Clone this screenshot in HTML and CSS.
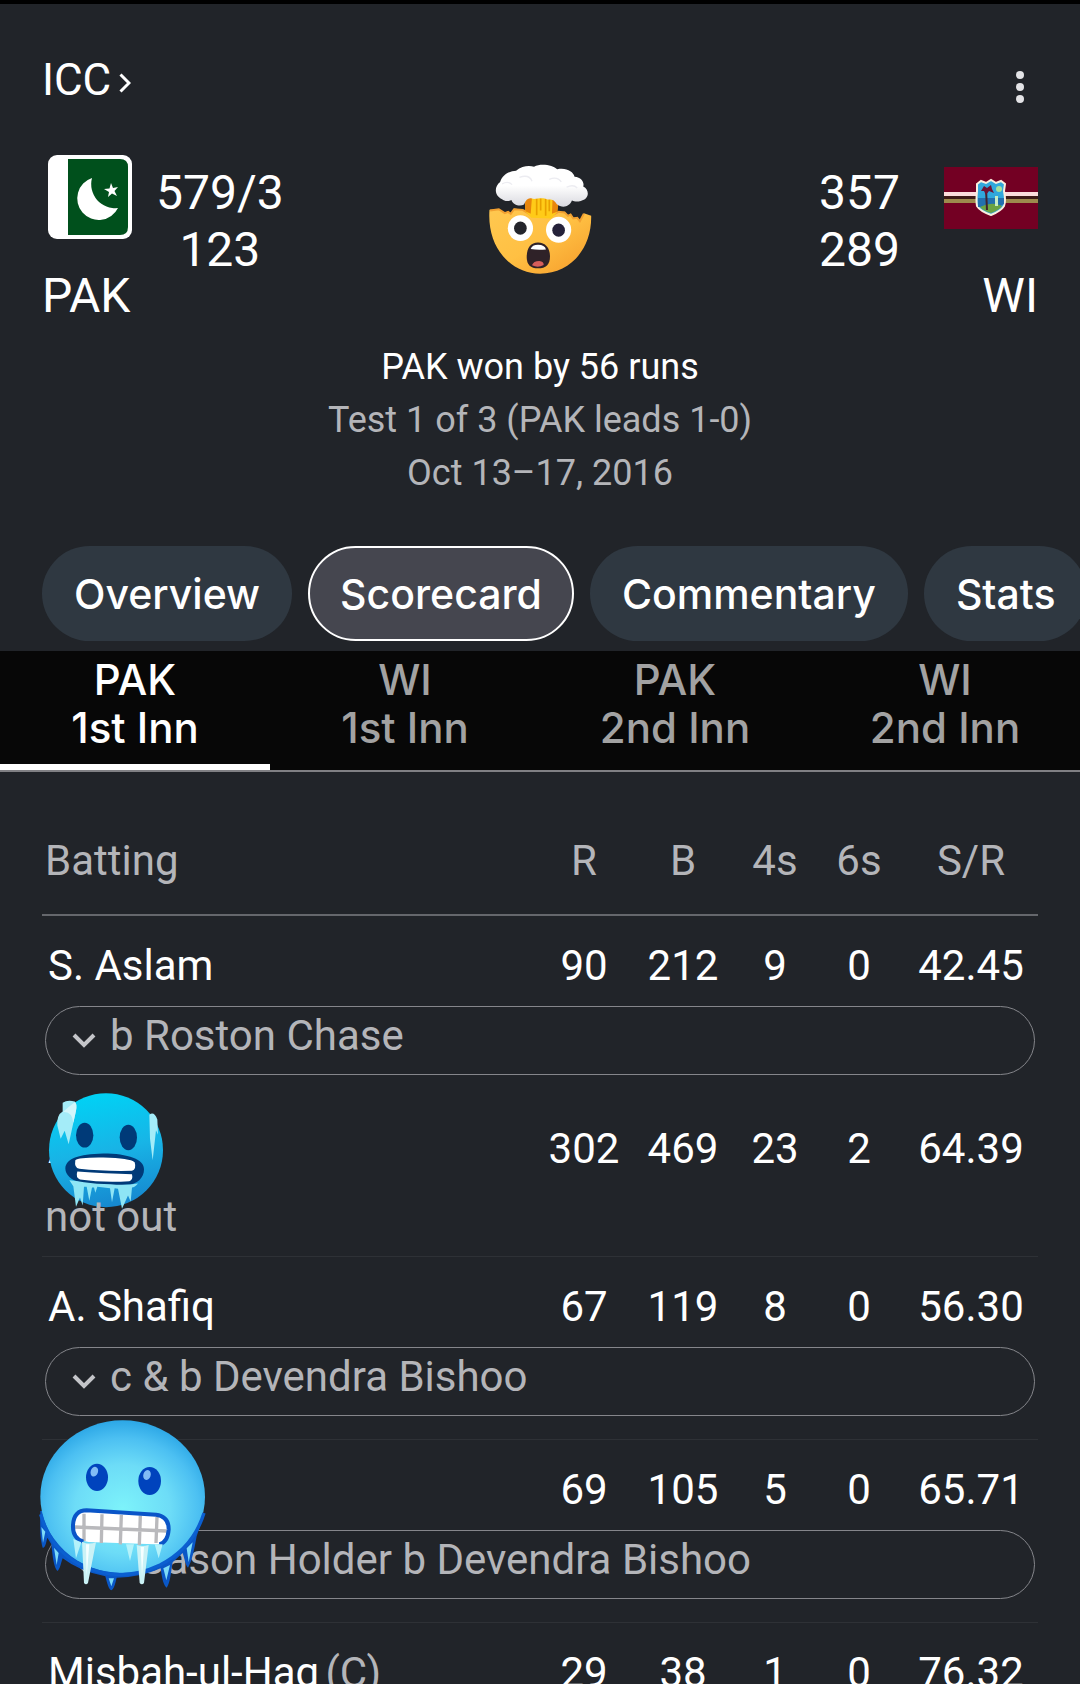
FILE: index.html
```html
<!DOCTYPE html>
<html lang="en">
  <head>
    <meta charset="UTF-8" />
    <meta name="viewport" content="width=device-width, initial-scale=1.0" />
    <title>PAK vs WI - Scorecard</title>
    <link rel="stylesheet" href="styles.css">
  </head>

  <body>
    <header class="match-header">
      <div class="top-bar">
        <a href="#" class="league-link">
          ICC
          <svg class="league-arrow" viewBox="0 0 12 20"><path d="M1.5 1.5 L10 10 L1.5 18.500" /></svg>
        </a>
        <button class="menu-button" aria-label="More options">
          <svg viewBox="0 0 8 34"><circle cx="4" cy="5" r="4" /><circle cx="4" cy="17" r="4" /><circle cx="4" cy="29" r="4" /></svg>
        </button>
      </div>

      <div class="match">
        <div class="team">
          <div class="team-info">
            <svg class="flag-pak" viewBox="0 0 84 84">
              <rect width="84" height="84" rx="9" fill="#fff" />
              <path d="M20 4 H72 Q80 4 80 12 V72 Q80 80 72 80 H20 Z" fill="#00501c" />
              <path d="M44 23 A21.500 21.500 0 1 0 70 53 A24 24 0 0 1 44 23 Z" fill="#fff" />
              <path d="M63 28 L65 33 L70 32 L66.500 36 L69 41 L64 38.500 L60 42 L61 37 L56 34 L61.500 33.500 Z" fill="#fff" />
            </svg>
            <div class="team-name">PAK</div>
          </div>
          <div class="scores">
            <div>579/3</div>
            <div>123</div>
          </div>
        </div>

        <!-- exploding head -->
        <svg class="mind-blown" viewBox="56 42 312 334">
          <defs>
            <linearGradient id="face" x1="0" y1="0" x2="1" y2="1">
              <stop offset="0" stop-color="#ffc850" />
              <stop offset="0.5" stop-color="#ffc043" />
              <stop offset="1" stop-color="#f59b2a" />
            </linearGradient>
            <linearGradient id="smoke" x1="0" y1="0" x2="0" y2="1">
              <stop offset="0.5" stop-color="#ffffff" />
              <stop offset="1" stop-color="#d9d9df" />
            </linearGradient>
          </defs>
          <path d="M60 180 L88 178 L106 190 L116 184 L124 190 L134 176 L160 180 L250 188 L286 186 L296 196 L304 192 L312 204 L324 202 L332 212 L344 190 L366 198 C368 300 300 372 212 372 C120 370 52 290 60 180 Z" fill="url(#face)" />
          <path d="M62 182 L88 178 L106 190 L116 186 L124 192 L134 178 L160 180 L186 196 L246 198 L268 186 L286 188 L296 198 L304 194 L312 206 L324 204 L332 214 L344 192" fill="none" stroke="#f2a031" stroke-width="6" />
          <path d="M166 140 L268 140 L264 186 L246 206 L186 204 L168 184 Z" fill="#ffcb18" />
          <path d="M166 140 L188 140 L184 192 L168 184 Z M250 140 L270 140 L264 186 L248 192 Z" fill="#e8850c" />
          <path d="M202 145 V196 M214 145 V182 M229 145 V198 M240 145 V184" stroke="#e9a000" stroke-width="5" />
          <path d="M98 148 C76 138 72 112 92 96 C100 72 124 62 140 62 C158 46 182 46 194 50 C216 38 252 46 264 58 C292 52 312 66 316 80 C338 82 346 98 342 110 C362 120 360 146 338 152 C328 158 312 154 308 152 C300 172 278 176 262 162 C252 144 240 150 232 148 C218 140 198 150 188 146 C178 142 170 148 164 164 C150 172 130 164 126 150 C116 156 104 154 98 148 Z" fill="url(#smoke)" />
          <path d="M98 102 Q116 92 128 104 M150 82 Q180 72 188 94 M240 88 Q264 78 276 96 M292 112 Q312 102 324 114" fill="none" stroke="#ececf1" stroke-width="4" />
          <ellipse cx="153" cy="235" rx="38" ry="39" fill="#fff" />
          <ellipse cx="268" cy="240" rx="38" ry="39" fill="#fff" />
          <ellipse cx="153" cy="235" rx="19" ry="20" fill="#24252b" />
          <ellipse cx="268" cy="241" rx="19" ry="20" fill="#25223a" />
          <path d="M206 278 C184 278 172 294 172 322 C172 346 184 356 206 356 C230 356 242 344 242 320 C242 294 228 278 206 278 Z" fill="#2f2228" />
          <path d="M184 298 Q188 285 206 285 Q226 285 230 299 Q206 302 184 298 Z" fill="#fff" />
          <path d="M188 347 Q192 334 210 334 Q224 336 223 346 Q206 356 188 347 Z" fill="#d65e5b" />
        </svg>

        <div class="team team-right">
          <div class="scores">
            <div>357</div>
            <div>289</div>
          </div>
          <div class="team-info">
            <svg class="flag-wi" viewBox="0 0 94 62">
              <rect width="94" height="62" fill="#730023" />
              <rect y="25" width="94" height="4" fill="#fbdcdc" />
              <rect y="29" width="94" height="3" fill="#3c1a16" />
              <rect y="32" width="94" height="4" fill="#9d8a4d" />
              <path d="M33 17 L37 14 L42 16 L47 13 L52 16 L57 14 L61 17 L60 24 Q62 34 60 39 Q57 44 47 48 Q36 44 33 39 Q32 34 33 24 Z" fill="#31a8dc" stroke="#fbeede" stroke-width="2" />
              <path d="M34 31 H60 V37 Q52 42 47 40 H34 Z" fill="#2370ae" />
              <path d="M36 40 Q48 34 58 39 Q55 43 47 46 Q40 44 36 40 Z" fill="#6aa343" />
              <path d="M42 22 L43 43" stroke="#40232e" stroke-width="2" />
              <path d="M37 24 L40 19 L43 21 L47 18 L48 22 L50 26 L45 24 L42 28 L40 24 Z" fill="#6e1233" />
              <circle cx="55" cy="22" r="3" fill="#a5e09c" />
              <rect x="51" y="29" width="3" height="10" fill="#c6ecc5" />
            </svg>
            <div class="team-name">WI</div>
          </div>
        </div>
      </div>

      <div class="result">
        <div class="result-main">PAK won by 56 runs</div>
        <div>Test 1 of 3 (PAK leads 1-0)</div>
        <div>Oct 13–17, 2016</div>
      </div>

      <nav class="chips">
        <button class="chip">Overview</button>
        <button class="chip active">Scorecard</button>
        <button class="chip">Commentary</button>
        <button class="chip">Stats</button>
      </nav>
    </header>

    <div class="innings">
      <button class="inning active">PAK<br>1st Inn</button>
      <button class="inning">WI<br>1st Inn</button>
      <button class="inning">PAK<br>2nd Inn</button>
      <button class="inning">WI<br>2nd Inn</button>
    </div>

    <main class="scorecard">
      <table class="batting">
        <colgroup>
          <col>
          <col class="col-r">
          <col class="col-b">
          <col class="col-4s">
          <col class="col-6s">
          <col class="col-sr">
        </colgroup>
        <thead>
          <tr>
            <th class="heading">Batting</th>
            <th>R</th>
            <th>B</th>
            <th>4s</th>
            <th>6s</th>
            <th>S/R</th>
          </tr>
        </thead>
        <tbody>
          <tr class="score-row">
            <td class="name">S. Aslam</td>
            <td>90</td>
            <td>212</td>
            <td>9</td>
            <td>0</td>
            <td>42.45</td>
          </tr>
          <tr class="dismissal-row plain">
            <td colspan="6">
              <button class="dismissal">
                <svg viewBox="0 0 24 24"><path d="M2 7 L12 17 L22 7" /></svg>
                b Roston Chase
              </button>
            </td>
          </tr>

          <tr class="score-row">
            <td class="name">
              A. Ali
              <svg class="sticker cold" viewBox="54 36 348 350">
                <defs>
                  <linearGradient id="cold-face" x1="0.4" y1="0" x2="0.6" y2="1">
                    <stop offset="0" stop-color="#00d2f5" />
                    <stop offset="0.5" stop-color="#18b4e6" />
                    <stop offset="1" stop-color="#1687cf" />
                  </linearGradient>
                </defs>
                <circle cx="228" cy="210" r="171" fill="url(#cold-face)" />
                <path d="M98 68 Q112 58 134 64 Q142 70 138 92 L116 192 L104 152 L92 176 L82 136 Q80 104 98 94 Z" fill="#a4ecf8" />
                <path d="M98 96 Q118 78 134 66 Q142 70 138 92 L130 128 Q126 92 98 96 Z" fill="#d2f6fb" />
                <path d="M358 104 Q372 92 382 118 L384 164 L378 150 L368 240 L360 176 Z" fill="#a4ecf8" />
                <ellipse cx="164" cy="165" rx="26" ry="37" fill="#003a78" />
                <ellipse cx="295" cy="172" rx="26" ry="38" fill="#003a78" />
                <path d="M106 264 C108 236 144 222 220 220 C294 220 344 238 342 268 C342 292 322 314 290 314 C240 318 190 316 150 306 C124 300 106 284 106 264 Z" fill="#003a78" />
                <path d="M136 240 Q146 231 220 232 Q300 234 314 246 Q320 266 306 272 Q220 274 148 266 Q132 262 136 240 Z" fill="#fff" />
                <path d="M142 274 Q230 280 306 282 Q310 298 298 303 Q220 308 150 298 Q136 292 142 274 Z" fill="#fff" />
                <path d="M118 300 Q138 302 162 306 Q200 312 242 312 Q284 316 324 310 Q314 322 306 322 L302 364 L294 346 L276 386 L264 326 L254 324 L246 366 L240 324 L202 320 L196 338 L192 322 L186 322 L178 362 L170 320 L162 320 L158 376 L150 352 L138 380 L130 318 Z" fill="#8ee5f5" />
              </svg>
            </td>
            <td>302</td>
            <td>469</td>
            <td>23</td>
            <td>2</td>
            <td>64.39</td>
          </tr>
          <tr class="dismissal-row">
            <td colspan="6"><div class="not-out">not out</div></td>
          </tr>

          <tr class="score-row">
            <td class="name">A. Shafiq</td>
            <td>67</td>
            <td>119</td>
            <td>8</td>
            <td>0</td>
            <td>56.30</td>
          </tr>
          <tr class="dismissal-row">
            <td colspan="6">
              <button class="dismissal">
                <svg viewBox="0 0 24 24"><path d="M2 7 L12 17 L22 7" /></svg>
                c &amp; b Devendra Bishoo
              </button>
            </td>
          </tr>

          <tr class="score-row">
            <td class="name">
              B. Azam
              <svg class="sticker frozen" viewBox="54 54 510 516">
                <defs>
                  <radialGradient id="frozen-face" cx="0.5" cy="0.58" r="0.58">
                    <stop offset="0" stop-color="#7df3fa" />
                    <stop offset="0.5" stop-color="#6ddcf7" />
                    <stop offset="0.8" stop-color="#4cc0f2" />
                    <stop offset="1" stop-color="#2ca7e6" />
                  </radialGradient>
                </defs>
                <path d="M61 330 C60 390 60 410 68 440 C76 442 78 424 82 410 L94 430 C98 470 102 500 112 510 C120 506 122 488 128 472 Q180 512 256 526 C262 548 266 566 274 568 C284 562 286 544 290 530 Q360 530 422 502 C426 536 432 556 440 560 C450 548 452 520 458 484 L488 456 C494 474 496 492 504 500 C516 480 522 450 530 406 L552 340 Z" fill="#0a57c6" />
                <ellipse cx="308" cy="287" rx="247" ry="229" fill="url(#frozen-face)" />
                <path d="M62 340 Q94 456 204 502 Q310 544 420 492 Q520 440 552 336" fill="none" stroke="#0b5fd0" stroke-width="10" />
                <path d="M64 378 L76 392 L69 426 Z M102 440 L116 456 L110 492 Z M266 532 L282 532 L274 556 Z M430 502 L450 492 L439 538 Z M500 442 L518 424 L506 484 Z" fill="#7ddcf8" />
                <ellipse cx="231" cy="229" rx="33" ry="41" fill="#0043bd" />
                <ellipse cx="389" cy="240" rx="34" ry="42" fill="#0043bd" />
                <ellipse cx="223" cy="212" rx="11" ry="15" fill="#82bcf5" transform="rotate(18 223 212)" />
                <ellipse cx="381" cy="222" rx="11" ry="15" fill="#82bcf5" transform="rotate(18 381 222)" />
                <path d="M200 328 L408 341 Q447 346 446 386 Q443 430 404 430 L206 423 Q157 416 159 370 Q162 328 200 328 Z" fill="#fff" />
                <path d="M164 378 L440 390 M192 338 V420 M246 340 L244 426 M304 342 L301 430 M361 344 L358 432 M411 348 L408 426" fill="none" stroke="#b9b9bc" stroke-width="10" />
                <path d="M190 422 Q157 412 159 372 Q162 328 200 328 L408 341 Q447 346 446 386 Q443 424 418 430" fill="none" stroke="#0a55c8" stroke-width="12" />
                <path d="M160 414 L184 424 L168 472 Z M318 430 H342 L330 480 Z M404 430 L428 430 L416 472 Z" fill="#b4f2fa" />
                <path d="M186 422 Q206 432 228 424 L204 546 Q198 554 192 546 Z M350 432 Q368 438 386 432 L372 546 Q366 554 359 546 Z" fill="#caf2f6" />
                <path d="M198 430 L208 430 L200 526 Z M362 438 L372 438 L366 526 Z" fill="#f5ffff" />
              </svg>
            </td>
            <td>69</td>
            <td>105</td>
            <td>5</td>
            <td>0</td>
            <td>65.71</td>
          </tr>
          <tr class="dismissal-row">
            <td colspan="6">
              <button class="dismissal">
                <svg viewBox="0 0 24 24"><path d="M2 7 L12 17 L22 7" /></svg>
                c Jason Holder b Devendra Bishoo
              </button>
            </td>
          </tr>

          <tr class="score-row">
            <td class="name">Misbah-ul-Haq<span class="captain">(C)</span></td>
            <td>29</td>
            <td>38</td>
            <td>1</td>
            <td>0</td>
            <td>76.32</td>
          </tr>
        </tbody>
      </table>
    </main>
  </body>
</html>
```

FILE: styles.css
```css
* {
  box-sizing: border-box;
}
body {
  margin: 0;
  height: 100vh;
  overflow: hidden;
  border-top: 4px solid #000;
  background-color: #212429;
  color: #fff;
  font-family: Roboto, "Liberation Sans", sans-serif;
}
button {
  margin: 0;
  padding: 0;
  border: none;
  background: none;
  color: inherit;
  font-family: inherit;
  cursor: pointer;
}
svg {
  display: block;
}

/* Header */
.match-header {
  padding-top: 52px;
}
.top-bar {
  display: flex;
  justify-content: space-between;
  align-items: flex-start;
  padding: 0 42px;
}
.league-link {
  display: flex;
  align-items: center;
  gap: 8px;
  color: #fff;
  font-size: 44px;
  line-height: 48px;
  text-decoration: none;
}
.league-arrow {
  width: 12px;
  height: 20px;
  margin-top: 6px;
  fill: none;
  stroke: #fff;
  stroke-width: 3;
}
.menu-button {
  padding: 14px 14px 0;
}
.menu-button svg {
  width: 8px;
  height: 34px;
  fill: #e3e3e6;
}

.match {
  display: grid;
  grid-template-columns: 1fr auto 1fr;
  align-items: start;
  padding: 51px 42px 0;
}
.team {
  display: flex;
  gap: 24px;
  font-size: 48px;
  line-height: 57px;
}
.team-right {
  justify-content: flex-end;
  gap: 44px;
}
.scores {
  padding-top: 9px;
  text-align: center;
}
.flag-pak {
  width: 84px;
  height: 84px;
  margin: 0 0 28px 6px;
}
.flag-wi {
  width: 94px;
  height: 62px;
  margin: 12px 0 38px;
}
.team-right .team-name {
  text-align: right;
}
.mind-blown {
  width: 104px;
  height: 111px;
  margin-top: 9px;
}

.result {
  padding-top: 17px;
  color: #b4b5b9;
  font-size: 36px;
  line-height: 53px;
  text-align: center;
}
.result-main {
  color: #fff;
}

/* Chips */
.chips {
  display: flex;
  gap: 16px;
  padding: 46px 0 10px 42px;
  overflow: hidden;
}
.chip {
  flex: none;
  height: 95px;
  padding: 0 32px;
  border-radius: 48px;
  background-color: #2f3841;
  font-family: Inter, Roboto, sans-serif;
  font-size: 41px;
  font-weight: 500;
}
.chip.active {
  padding: 0 30px;
  border: 2px solid #fff;
  background-color: #45464f;
}

/* Innings tabs */
.innings {
  display: grid;
  grid-template-columns: repeat(4, 1fr);
  border-bottom: 2px solid #808084;
  background-color: #070707;
}
.inning {
  padding: 5px 0 12px;
  border-bottom: 6px solid transparent;
  color: #a2a2a2;
  font-family: Inter, Roboto, sans-serif;
  font-size: 42px;
  font-weight: 500;
  line-height: 48px;
}
.inning.active {
  border-bottom-color: #fff;
  color: #fff;
}

/* Batting table */
.scorecard {
  padding: 65px 42px 0;
}
.batting {
  width: 100%;
  table-layout: fixed;
  border-spacing: 0;
  font-size: 42px;
  line-height: 48px;
  text-align: center;
}
.col-r {
  width: 92px;
}
.col-b {
  width: 106px;
}
.col-4s {
  width: 78px;
}
.col-6s {
  width: 90px;
}
.col-sr {
  width: 134px;
}
th {
  padding: 0 0 29px;
  border-bottom: 2px solid #65676c;
  color: #b4b5b9;
  font-weight: 400;
}
.heading {
  padding-left: 3px;
  text-align: left;
}
td {
  padding: 0;
}
.score-row td {
  padding: 26px 0 16px;
}
.score-row .name {
  position: relative;
  padding-left: 6px;
  text-align: left;
  white-space: nowrap;
}
.dismissal-row td {
  padding: 0 3px 23px;
  border-bottom: 1px solid #2e3136;
}
.dismissal-row.plain td {
  border-bottom-color: transparent;
}
.dismissal {
  display: flex;
  align-items: flex-start;
  gap: 14px;
  width: 100%;
  padding: 5px 26px 14px;
  border: 1px solid #85868b;
  border-radius: 35px;
  color: #b4b5b9;
  font-size: 42px;
  line-height: 48px;
}
.dismissal svg {
  width: 24px;
  height: 24px;
  margin-top: 16px;
  fill: none;
  stroke: #c4c5c9;
  stroke-width: 4;
}
.not-out {
  position: relative;
  z-index: 2; /* Keeps the text above the sticker */
  padding-top: 4px;
  margin-bottom: -8px;
  color: #b4b5b9;
  text-align: left;
}
.captain {
  margin-left: 6px;
  color: #b4b5b9;
}

/* Stickers over the player names */
.sticker {
  position: absolute;
  z-index: 1;
}
.cold {
  top: -7px;
  left: 6px;
  width: 116px;
  height: 117px;
}
.frozen {
  top: -21px;
  left: -4px;
  width: 170px;
  height: 172px;
}
```
